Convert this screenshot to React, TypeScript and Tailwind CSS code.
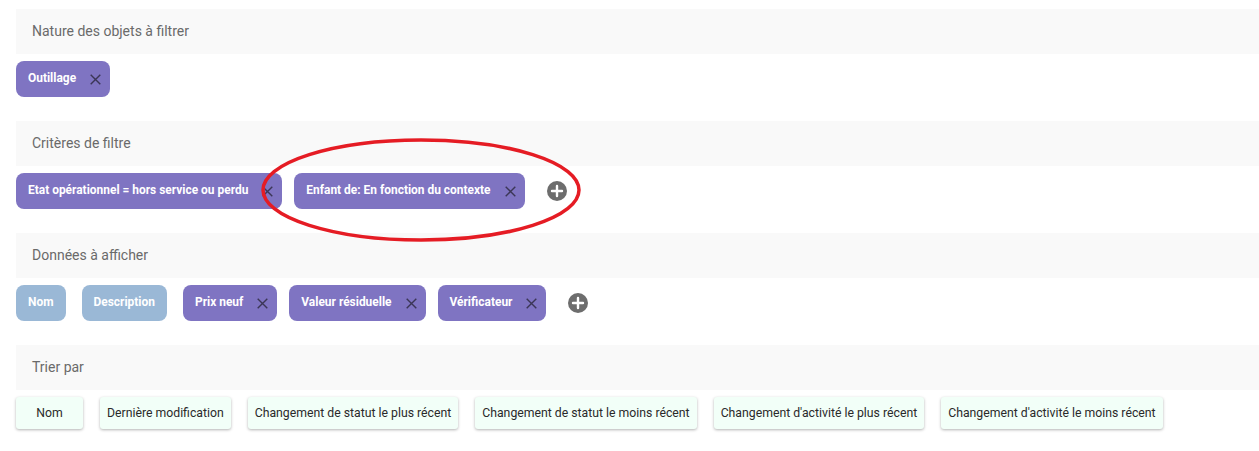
import React from "react";

const XIcon = () => (
  <svg width="11" height="11" viewBox="0 0 11 11" className="shrink-0">
    <path d="M0.7 0.7L10.3 10.3M10.3 0.7L0.7 10.3" stroke="#3b3656" strokeWidth="1.4" fill="none" />
  </svg>
);

const PlusIcon = () => (
  <svg width="20" height="20" viewBox="0 0 20 20" className="shrink-0">
    <circle cx="10" cy="10" r="10" fill="#6d6d6d" />
    <path d="M10 5V15M5 10H15" stroke="#ffffff" strokeWidth="2.4" strokeLinecap="round" />
  </svg>
);

const Header = ({ children }: { children: React.ReactNode }) => (
  <div className="h-[45px] bg-[#f9f9f9] flex items-center pl-4 text-[14px] text-[#6a6a6a]">
    {children}
  </div>
);

const Chip = ({ label }: { label: string }) => (
  <div className="h-[36px] rounded-[8px] bg-[#7f74c2] flex items-center pl-3 pr-[9px] gap-[14px] text-white font-bold text-[11.95px]">
    <span>{label}</span>
    <XIcon />
  </div>
);

const FixedChip = ({ label }: { label: string }) => (
  <div className="h-[36px] rounded-[8px] bg-[#9ab8d6] flex items-center px-3 text-white font-bold text-[11.95px]">
    {label}
  </div>
);

const SortBtn = ({ label }: { label: string }) => (
  <div className="h-[32px] rounded-[3px] bg-[#f2fff8] shadow-[0_1px_3px_rgba(0,0,0,0.3)] flex items-center px-[7px] text-[12.25px] text-[#2a2a2a]">
    {label}
  </div>
);

export default function App() {
  return (
    <div
      className="relative w-[1259px] h-[451px] bg-white pt-[9px] pl-4 overflow-hidden"
      style={{ fontFamily: "Roboto, 'Noto Sans', sans-serif" }}
    >
      <Header>Nature des objets à filtrer</Header>
      <div className="flex items-center mt-[7px] mb-[24px]">
        <Chip label="Outillage" />
      </div>

      <Header>Critères de filtre</Header>
      <div className="flex items-center gap-3 mt-[7px] mb-[24px]">
        <Chip label="Etat opérationnel = hors service ou perdu" />
        <Chip label="Enfant de: En fonction du contexte" />
        <div className="ml-[10px]">
          <PlusIcon />
        </div>
      </div>

      <Header>Données à afficher</Header>
      <div className="flex items-center mt-[7px] mb-[24px]">
        <div className="flex items-center gap-4 mr-4">
          <FixedChip label="Nom" />
          <FixedChip label="Description" />
        </div>
        <div className="flex items-center gap-3">
          <Chip label="Prix neuf" />
          <Chip label="Valeur résiduelle" />
          <Chip label="Vérificateur" />
          <div className="ml-[10px]">
            <PlusIcon />
          </div>
        </div>
      </div>

      <Header>Trier par</Header>
      <div className="flex items-center gap-[17px] mt-[7px]">
        <div className="w-[67px] h-[32px] rounded-[3px] bg-[#f2fff8] shadow-[0_1px_3px_rgba(0,0,0,0.3)] flex items-center justify-center text-[12.25px] text-[#2a2a2a]">
          Nom
        </div>
        <SortBtn label="Dernière modification" />
        <SortBtn label="Changement de statut le plus récent" />
        <SortBtn label="Changement de statut le moins récent" />
        <SortBtn label="Changement d'activité le plus récent" />
        <SortBtn label="Changement d'activité le moins récent" />
      </div>

      <svg
        className="absolute left-[259px] top-[136px] pointer-events-none"
        width="324"
        height="110"
        viewBox="0 0 324 110"
      >
        <ellipse cx="162" cy="54" rx="158" ry="50" fill="none" stroke="#e51c24" strokeWidth="3.5" />
      </svg>
    </div>
  );
}
